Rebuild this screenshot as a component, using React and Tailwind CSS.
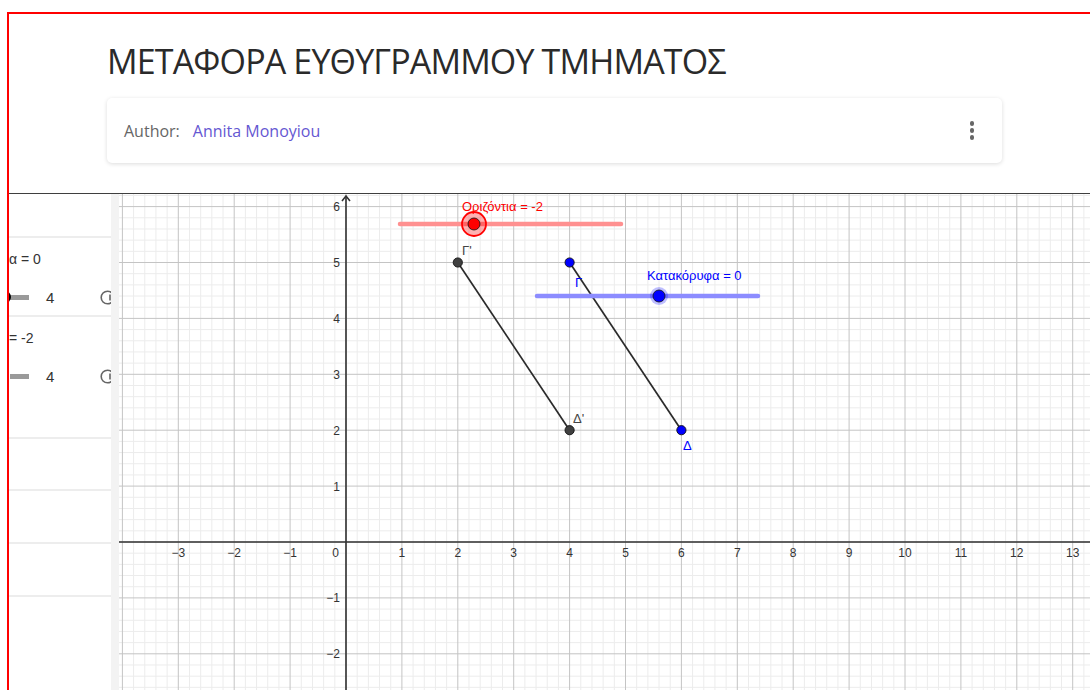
import React from 'react';

// graphics view coordinate system (page pixels)
const OX = 346;
const OY = 542;
const UNIT = 55.9;
const VIEW = { x: 119, y: 194, w: 971, h: 496 };

const gx = (v) => OX + v * UNIT;
const gy = (v) => OY - v * UNIT;

const GRAPH_FONT = '"Liberation Sans", Arial, sans-serif';

function Grid() {
  const minor = [];
  const major = [];
  const step = UNIT / 5;
  for (let i = -25; i <= 70; i++) {
    const x = OX + i * step;
    if (x < VIEW.x || x > VIEW.x + VIEW.w) continue;
    const line = <line key={`v${i}`} x1={x} y1={VIEW.y} x2={x} y2={VIEW.y + VIEW.h} />;
    (i % 5 === 0 ? major : minor).push(line);
  }
  for (let j = -20; j <= 40; j++) {
    const y = OY - j * step;
    if (y < VIEW.y || y > VIEW.y + VIEW.h) continue;
    const line = <line key={`h${j}`} x1={VIEW.x} y1={y} x2={VIEW.x + VIEW.w} y2={y} />;
    (j % 5 === 0 ? major : minor).push(line);
  }
  return (
    <>
      <g stroke="#ececec" strokeWidth="1">{minor}</g>
      <g stroke="#c4c4c4" strokeWidth="1">{major}</g>
    </>
  );
}

function AxisLabels() {
  const xs = [-3, -2, -1, 1, 2, 3, 4, 5, 6, 7, 8, 9, 10, 11, 12, 13];
  const ys = [-2, -1, 1, 2, 3, 4, 5, 6];
  const fmt = (n) => (n < 0 ? `\u2212${-n}` : `${n}`);
  return (
    <g fill="#333" fontSize="12" fontFamily={GRAPH_FONT}>
      {xs.map((n) => (
        <text key={`x${n}`} x={gx(n)} y={OY + 15} textAnchor="middle">
          {fmt(n)}
        </text>
      ))}
      {ys.map((n) => (
        <text key={`y${n}`} x={OX - 6} y={gy(n) + 4.5} textAnchor="end">
          {fmt(n)}
        </text>
      ))}
      <text x={OX - 7} y={OY + 15} textAnchor="end">
        0
      </text>
    </g>
  );
}

function Slider({ x1, x2, y, handle, color, light, halo, label, labelX, labelY }) {
  return (
    <g>
      <line x1={x1} y1={y} x2={x2} y2={y} stroke={light} strokeWidth="4.5" strokeLinecap="round" />
      {halo}
      <circle cx={handle} cy={y} r={6} fill={color} stroke="#111" strokeWidth="0.8" />
      <text x={labelX} y={labelY} fill={color} fontSize="13" fontFamily={GRAPH_FONT}>
        {label}
      </text>
    </g>
  );
}

function GraphicsView() {
  const seg = (a, b, key) => (
    <line key={key} x1={gx(a[0])} y1={gy(a[1])} x2={gx(b[0])} y2={gy(b[1])} stroke="#2b2b2b" strokeWidth="1.7" />
  );
  return (
    <svg
      width={VIEW.w}
      height={VIEW.h}
      viewBox={`${VIEW.x} ${VIEW.y} ${VIEW.w} ${VIEW.h}`}
      className="block shrink-0 bg-white"
    >
      <Grid />

      {/* axes */}
      <g stroke="#333" strokeWidth="1.6" fill="none">
        <line x1={VIEW.x} y1={OY} x2={VIEW.x + VIEW.w} y2={OY} />
        <line x1={OX} y1={VIEW.y + 2} x2={OX} y2={VIEW.y + VIEW.h} />
        <polyline points={`${OX - 4},${VIEW.y + 7} ${OX},${VIEW.y + 2} ${OX + 4},${VIEW.y + 7}`} />
      </g>
      <AxisLabels />

      {/* segments */}
      {seg([2, 5], [4, 2], 'image')}
      {seg([4, 5], [6, 2], 'orig')}

      {/* horizontal slider */}
      <Slider
        x1={400}
        x2={621}
        y={224}
        handle={474}
        color="#ff0000"
        light="#ff9090"
        halo={<circle cx={474} cy={224} r={12} fill="#ff0000" fillOpacity="0.3" stroke="#ff0000" strokeWidth="1.8" />}
        label="Οριζόντια = -2"
        labelX={462}
        labelY={211}
      />

      {/* vertical slider */}
      <Slider
        x1={537}
        x2={758}
        y={296}
        handle={659}
        color="#0000ff"
        light="#8c8cff"
        halo={<circle cx={659} cy={296} r={9} fill="#0000ff" fillOpacity="0.25" />}
        label="Κατακόρυφα = 0"
        labelX={647}
        labelY={280}
      />

      {/* points */}
      <g stroke="#111" strokeWidth="0.9">
        <circle cx={gx(2)} cy={gy(5)} r="4.6" fill="#404040" />
        <circle cx={gx(4)} cy={gy(2)} r="4.6" fill="#404040" />
        <circle cx={gx(4)} cy={gy(5)} r="4.6" fill="#0000ff" />
        <circle cx={gx(6)} cy={gy(2)} r="4.6" fill="#0000ff" />
      </g>
      <g fontSize="13" fontFamily={GRAPH_FONT}>
        <text x={462} y={255} fill="#444">Γ'</text>
        <text x={573} y={423} fill="#444">Δ'</text>
        <text x={575} y={287} fill="#0000ff">Γ</text>
        <text x={683} y={450} fill="#0000ff">Δ</text>
      </g>
    </svg>
  );
}

function PlayButton() {
  return (
    <svg width="15" height="15" viewBox="0 0 15 15" className="shrink-0">
      <circle cx="7.5" cy="7.5" r="6.3" fill="none" stroke="#666" strokeWidth="1.6" />
      <line x1="10" y1="4.5" x2="10" y2="10.5" stroke="#666" strokeWidth="1.6" />
    </svg>
  );
}

function SliderRow({ text, withHandle, height }) {
  return (
    <div className={`border-t-2 border-[#ededed] ${height}`}>
      <div className="pt-[13px] h-[29px] leading-[16px] text-[14px] text-[#333] whitespace-nowrap">{text}</div>
      <div className="mt-[20px] flex items-center h-[20px]">
        <div className="relative ml-px w-[19px] h-[5px] bg-[#9a9a9a] shrink-0">
          {withHandle && (
            <div className="absolute -left-[11px] top-1/2 -translate-y-1/2 w-[12px] h-[12px] rounded-full bg-black" />
          )}
        </div>
        <span className="ml-[17px] text-[15px] text-[#333] leading-none shrink-0">4</span>
        <div className="ml-[46px] shrink-0">
          <PlayButton />
        </div>
      </div>
    </div>
  );
}

function AlgebraView() {
  return (
    <div className="w-[102px] shrink-0 overflow-hidden bg-white" style={{ fontFamily: GRAPH_FONT }}>
      <div className="h-[42px]" />
      <SliderRow text="α = 0" withHandle height="h-[79px]" />
      <SliderRow text="= -2" height="h-[122px]" />
      <div className="h-[52px] border-t-2 border-[#ededed]" />
      <div className="h-[53px] border-t-2 border-[#ededed]" />
      <div className="h-[53px] border-t-2 border-[#ededed]" />
      <div className="h-[120px] border-t-2 border-[#ededed]" />
    </div>
  );
}

export default function App() {
  return (
    <div className="w-[1090px] h-[690px] overflow-hidden bg-white" style={{ fontFamily: '"Open Sans", sans-serif' }}>
      <div className="ml-[7px] mt-[12px] w-[1110px] h-[720px] border-2 border-[#ff0000]">
        {/* header */}
        <div className="h-[179px] pl-[98px]">
          <h1 className="pt-[27px] h-[67px] text-[34px] leading-[40px] tracking-[-0.85px] text-[#2a2a2a] font-normal">
            ΜΕΤΑΦΟΡΑ ΕΥΘΥΓΡΑΜΜΟΥ ΤΜΗΜΑΤΟΣ
          </h1>
          <div className="mt-[17px] w-[895px] h-[65px] rounded-[5px] bg-white shadow-[0_1px_4px_rgba(0,0,0,0.14)] flex items-center pl-[17px] pr-[28px]">
            <span className="text-[16px] text-[#666]">Author:</span>
            <span className="ml-[13px] text-[16px] text-[#6557d2]">Annita Monoyiou</span>
            <div className="ml-auto flex flex-col gap-[2.5px]">
              <span className="w-[4.5px] h-[4.5px] rounded-full bg-[#666]" />
              <span className="w-[4.5px] h-[4.5px] rounded-full bg-[#666]" />
              <span className="w-[4.5px] h-[4.5px] rounded-full bg-[#666]" />
            </div>
          </div>
        </div>

        {/* applet */}
        <div className="h-px bg-[#3f3f3f]" />
        <div className="flex">
          <AlgebraView />
          <div className="w-[8px] shrink-0 bg-[#f3f3f3]" />
          <GraphicsView />
        </div>
      </div>
    </div>
  );
}
